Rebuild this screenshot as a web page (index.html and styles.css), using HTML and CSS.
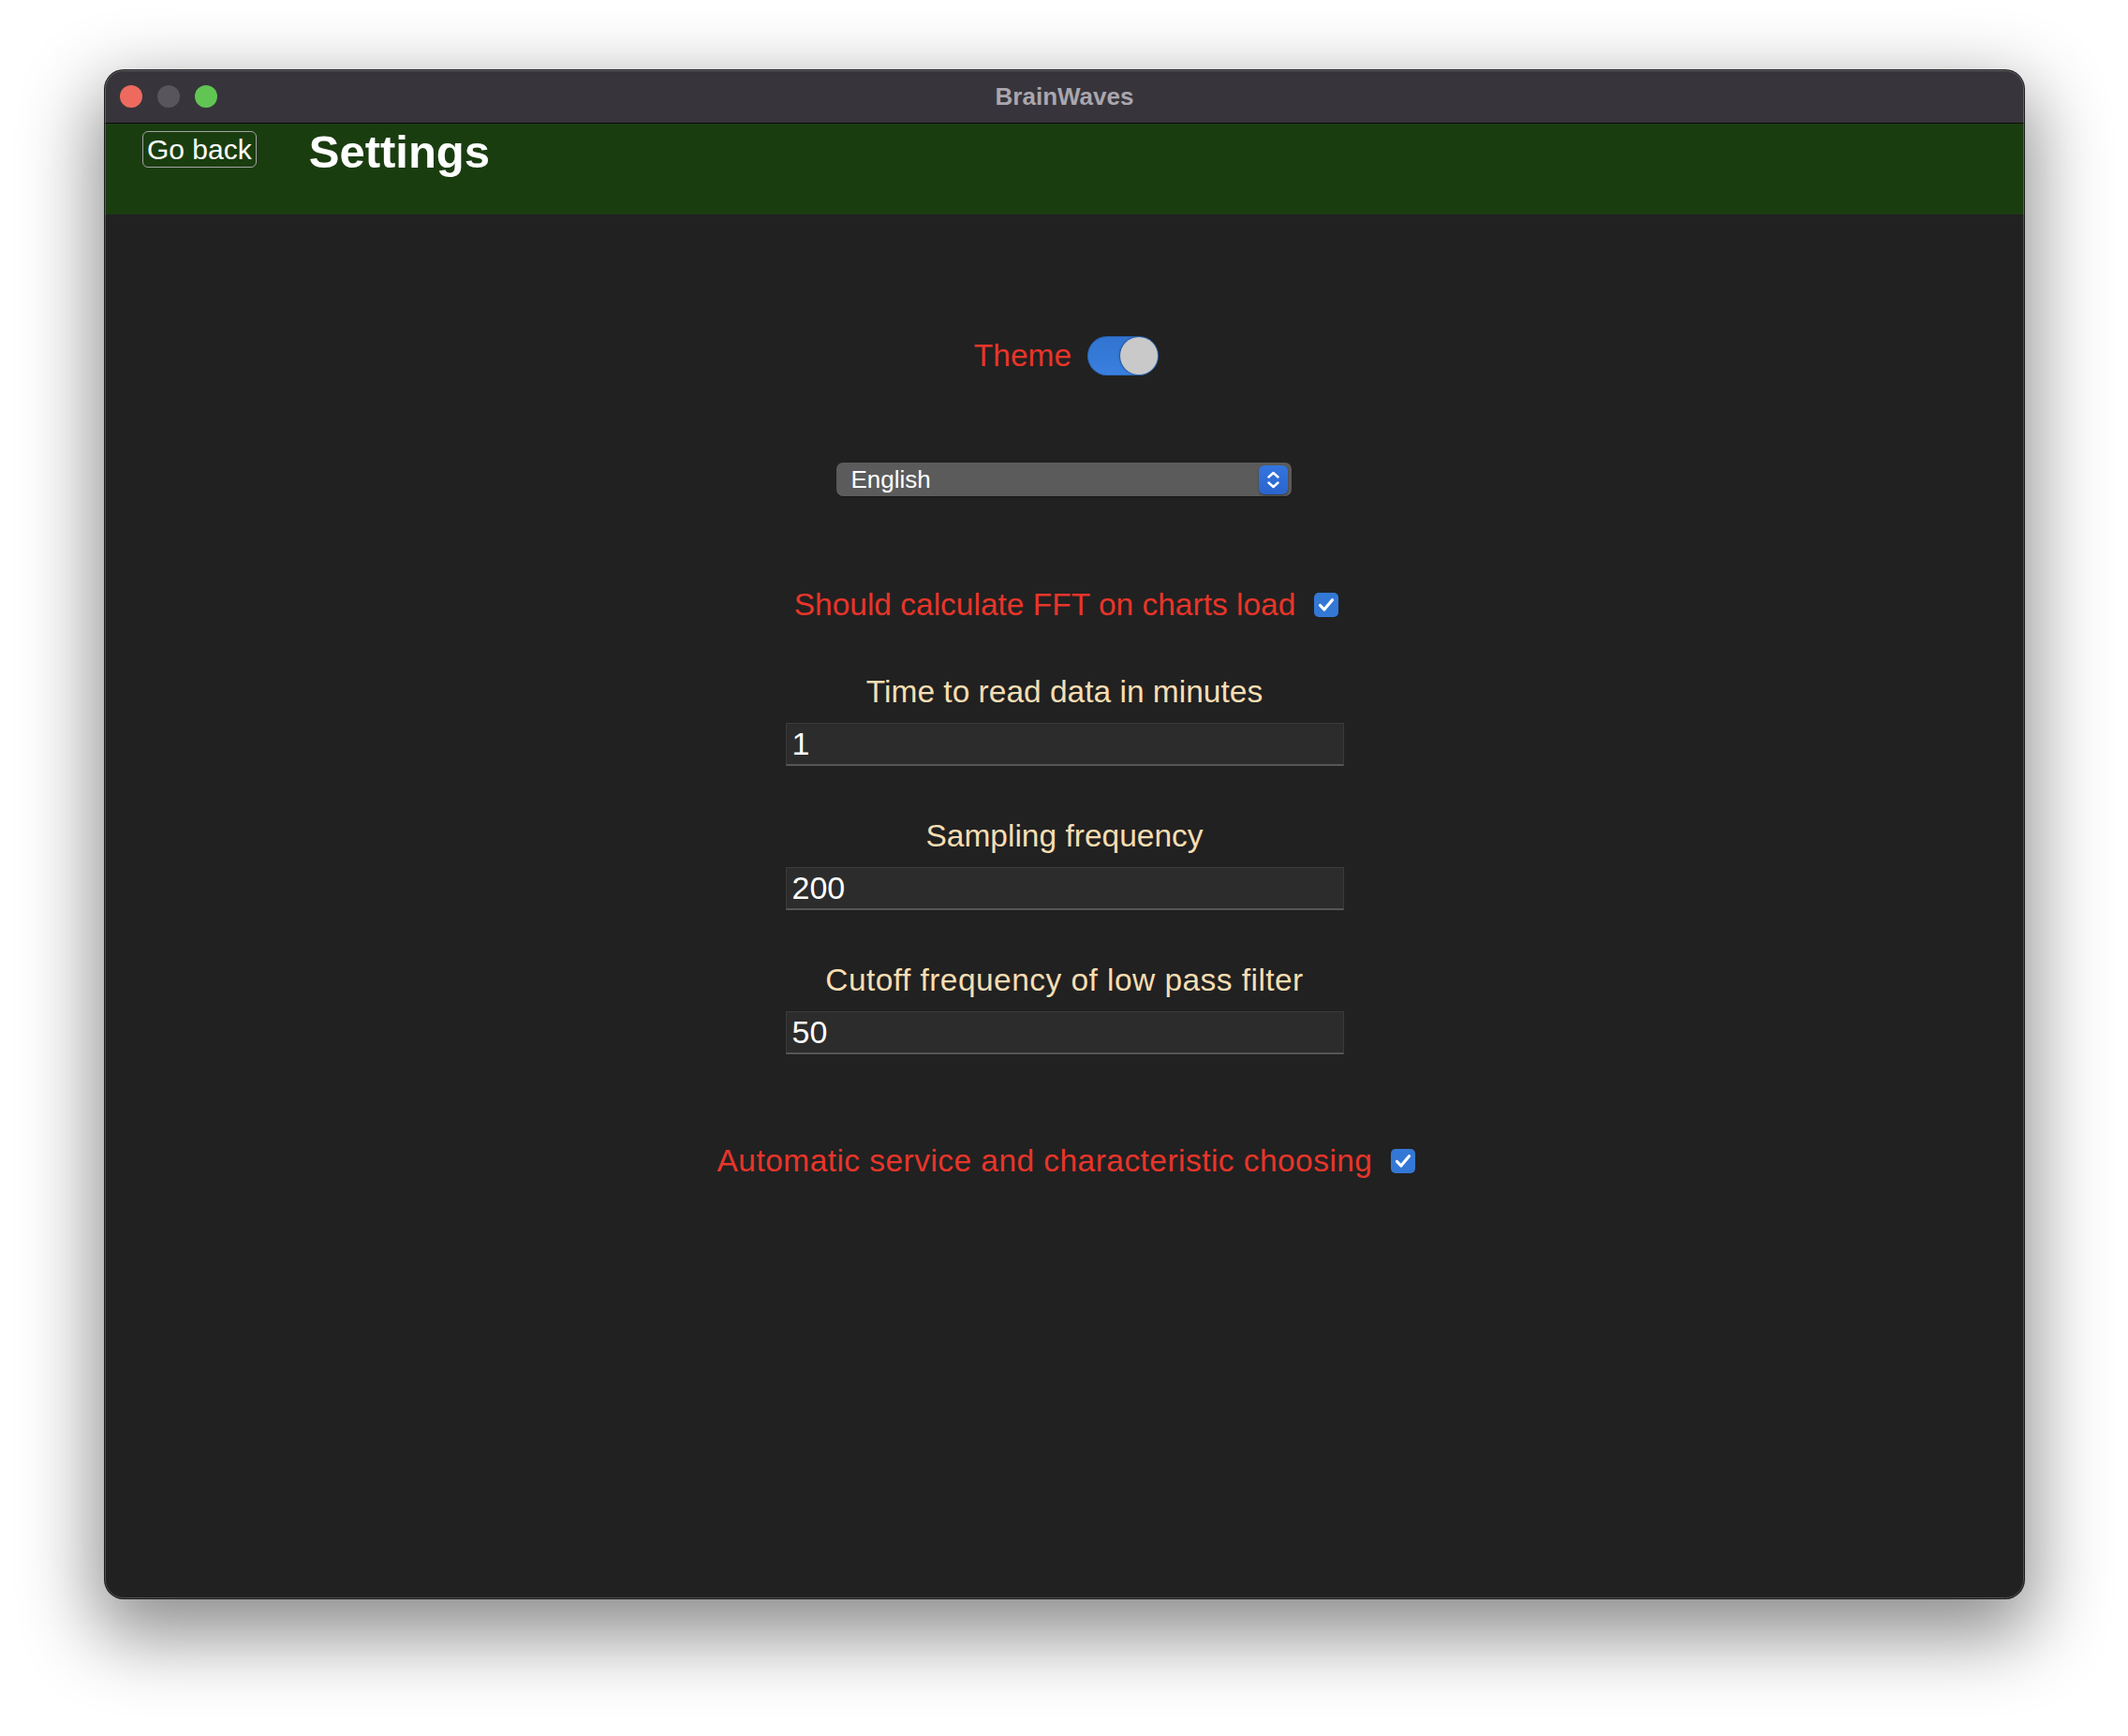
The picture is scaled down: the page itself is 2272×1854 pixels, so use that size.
FILE: index.html
```html
<!DOCTYPE html>
<html lang="en">
<head>
<meta charset="utf-8">
<title>BrainWaves</title>
<link rel="stylesheet" href="styles.css">
</head>
<body>
<div class="desktop">
  <div class="window">
    <div class="titlebar">
      <div class="lights">
        <span class="light light-close"></span>
        <span class="light light-min"></span>
        <span class="light light-max"></span>
      </div>
      <div class="title">BrainWaves</div>
      <div class="spacer"></div>
    </div>
    <header class="appbar">
      <button class="back">Go back</button>
      <h1 class="page-title">Settings</h1>
    </header>
    <main class="settings">
      <div class="row theme-row">
        <span class="label-red">Theme</span>
        <span class="toggle"><span class="knob"></span></span>
      </div>
      <div class="select">
        <span class="select-text">English</span>
        <span class="stepper">
          <svg width="31" height="31" viewBox="0 0 31 31"><path d="M10.5 12.5 L15.5 8 L20.5 12.5" fill="none" stroke="#fff" stroke-width="2.4" stroke-linecap="round" stroke-linejoin="round"/><path d="M10.5 18.5 L15.5 23 L20.5 18.5" fill="none" stroke="#fff" stroke-width="2.4" stroke-linecap="round" stroke-linejoin="round"/></svg>
        </span>
      </div>
      <div class="row check-row fft-row">
        <span class="label-red">Should calculate FFT on charts load</span>
        <span class="checkbox"><svg width="26" height="26" viewBox="0 0 26 26"><path d="M6.5 13.5 L10.8 18 L19.5 7.8" fill="none" stroke="#fff" stroke-width="3.2" stroke-linecap="round" stroke-linejoin="round"/></svg></span>
      </div>
      <div class="field field-first">
        <div class="field-label">Time to read data in minutes</div>
        <div class="input">1</div>
      </div>
      <div class="field">
        <div class="field-label">Sampling frequency</div>
        <div class="input">200</div>
      </div>
      <div class="field">
        <div class="field-label label-wide">Cutoff frequency of low pass filter</div>
        <div class="input">50</div>
      </div>
      <div class="row check-row auto-row">
        <span class="label-red label-wide">Automatic service and characteristic choosing</span>
        <span class="checkbox"><svg width="26" height="26" viewBox="0 0 26 26"><path d="M6.5 13.5 L10.8 18 L19.5 7.8" fill="none" stroke="#fff" stroke-width="3.2" stroke-linecap="round" stroke-linejoin="round"/></svg></span>
      </div>
    </main>
  </div>
</div>
</body>
</html>
```

FILE: styles.css
```css
html, body {
  margin: 0;
  padding: 0;
  background: #ffffff;
}

body {
  font-family: "Liberation Sans", Arial, Helvetica, sans-serif;
}

.desktop {
  width: 2272px;
  height: 1854px;
  box-sizing: border-box;
  padding: 75px 0 0 112px;
}

.window {
  position: relative;
  width: 2049px;
  height: 1632px;
  border-radius: 20px;
  overflow: hidden;
  background: #212121;
  display: flex;
  flex-direction: column;
  box-shadow: 0 0 0 1px rgba(0, 0, 0, 0.85), 0 30px 80px 10px rgba(0, 0, 0, 0.45);
}

.window::after {
  content: "";
  position: absolute;
  inset: 0;
  border-radius: 20px;
  border: 1px solid rgba(255, 255, 255, 0.22);
  pointer-events: none;
}

.titlebar {
  height: 56px;
  flex: none;
  background: #37353b;
  border-bottom: 1px solid #0c0c0c;
  display: grid;
  grid-template-columns: 1fr auto 1fr;
  align-items: center;
}

.lights {
  display: flex;
  gap: 16px;
  padding-left: 16px;
}

.light {
  width: 24px;
  height: 24px;
  border-radius: 50%;
  display: block;
}

.light-close { background: #ee6a5f; }
.light-min { background: #58565c; }
.light-max { background: #61c554; }

.title {
  font-size: 26px;
  font-weight: bold;
  color: #a9a6ae;
}

.appbar {
  height: 97px;
  flex: none;
  background: #1a3d10;
  display: flex;
  align-items: flex-start;
  padding-left: 40px;
  box-sizing: border-box;
}

.back {
  margin-top: 8px;
  height: 39px;
  padding: 0 4px;
  font-family: "Liberation Sans", Arial, sans-serif;
  font-size: 30px;
  line-height: 1;
  color: #ffffff;
  background: transparent;
  border: 1px solid #a3a3a3;
  border-radius: 6px;
}

.page-title {
  margin: 6px 0 0 56px;
  font-size: 49px;
  font-weight: bold;
  line-height: 1;
  color: #ffffff;
}

.settings {
  display: flex;
  flex-direction: column;
  align-items: center;
  padding-top: 130px;
}

.row {
  display: flex;
  align-items: center;
}

.label-red {
  color: #e8352a;
  font-size: 33.5px;
  line-height: 38px;
}

.label-wide {
  letter-spacing: 0.45px;
}

.theme-row {
  gap: 17px;
  height: 42px;
  padding-left: 4px;
}

.toggle {
  position: relative;
  width: 76px;
  height: 42px;
  border-radius: 21px;
  background: linear-gradient(#3173d0, #3a80e0);
  box-shadow: inset 0 0 0 1px rgba(0, 0, 0, 0.15);
  display: flex;
  justify-content: flex-end;
  align-items: center;
  padding-right: 1px;
  box-sizing: border-box;
}

.knob {
  width: 40px;
  height: 40px;
  border-radius: 50%;
  background: #c9c9c9;
  box-shadow: -1px 0 2px rgba(0, 0, 0, 0.35);
}

.select {
  margin-top: 93px;
  width: 486px;
  height: 36px;
  border-radius: 7px;
  background: #5b5b5b;
  box-shadow: 0 1px 1px rgba(0, 0, 0, 0.4);
  display: flex;
  align-items: center;
  justify-content: space-between;
  padding: 0 4px 0 16px;
  box-sizing: border-box;
  margin-right: 2px;
}

.select-text {
  color: #ffffff;
  font-size: 26px;
}

.stepper {
  width: 31px;
  height: 31px;
  border-radius: 6px;
  background: linear-gradient(#3375e0, #2a64cc);
  box-shadow: 0 1px 2px rgba(0, 0, 0, 0.4);
  display: block;
}

.stepper svg {
  display: block;
}

.check-row {
  gap: 20px;
  height: 38px;
  padding-left: 4px;
}

.fft-row {
  margin-top: 97px;
}

.auto-row {
  margin-top: 95px;
}

.checkbox {
  width: 26px;
  height: 26px;
  border-radius: 5px;
  background: #3478d6;
  display: block;
}

.checkbox svg {
  display: block;
}

.field {
  display: flex;
  flex-direction: column;
  align-items: center;
  margin-top: 56px;
}

.field-first {
  margin-top: 55px;
}

.field-label {
  color: #f5deb3;
  font-size: 33.5px;
  line-height: 38px;
}

.input {
  margin-top: 14px;
  width: 596px;
  height: 46px;
  box-sizing: border-box;
  background: #2c2c2c;
  border: 1px solid #3b3b3b;
  border-bottom: 2px solid #565656;
  color: #ffffff;
  font-size: 34px;
  line-height: 43px;
  padding: 0 6px;
}
```
